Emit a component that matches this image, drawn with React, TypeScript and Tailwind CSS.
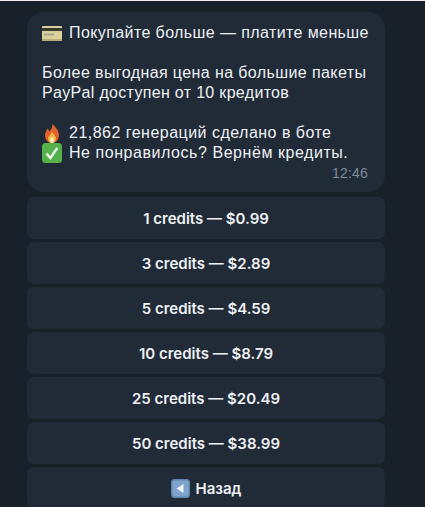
const packs = [
  "1 credits — $0.99",
  "3 credits — $2.89",
  "5 credits — $4.59",
  "10 credits — $8.79",
  "25 credits — $20.49",
  "50 credits — $38.99",
]

function CardIcon() {
  return (
    <svg width="20" height="15" viewBox="0 0 20 15" className="shrink-0">
      <rect x="0" y="0" width="20" height="15" rx="1" fill="#d9d09a" />
      <rect x="0" y="2" width="20" height="3" fill="#3a3a30" />
      <rect x="2" y="7.500" width="10" height="2" fill="#a3a594" />
      <rect x="0" y="13" width="20" height="2" fill="#b8ad78" />
    </svg>
  )
}

function FireIcon() {
  return (
    <svg width="20" height="20" viewBox="0 0 20 20" className="shrink-0">
      <path d="M10.500 0c.5 3 6.500 6 6.500 12 0 5-3.200 8-7 8s-7-3-7-8c0-3 1.800-4.500 2.500-6.500 1 1 1.500 2 1.800 3.300C8.800 7 11 4 10.500 0z" fill="#e0622a" />
      <path d="M10 8.500c.5 2 4 3.800 4 7 0 2.700-1.800 4.500-4 4.500s-4-2-4-4.500C6 13 9.500 11.500 10 8.500z" fill="#f7b545" />
      <path d="M10 13.500c.5 1 2 2.200 2 4 0 1.500-1 2.500-2 2.500s-2-1-2-2.500c0-1.800 1.500-3 2-4z" fill="#fdf0c0" />
    </svg>
  )
}

function CheckIcon() {
  return (
    <svg width="20" height="20" viewBox="0 0 20 20" className="shrink-0">
      <rect width="20" height="20" rx="3.500" fill="#55b24a" />
      <path d="M4.500 10.500l3.800 4.500 7-10" fill="none" stroke="#f2f7f0" strokeWidth="2.400" />
    </svg>
  )
}

function BackIcon() {
  return (
    <svg width="19" height="19" viewBox="0 0 19 19" className="shrink-0">
      <rect width="19" height="19" rx="3.500" fill="#5f84ad" />
      <rect x="1.500" y="1.500" width="16" height="16" rx="2" fill="#7fa3cb" />
      <path d="M12.500 5v9l-7-4.500z" fill="#f0f4f8" />
    </svg>
  )
}

export default function App() {
  return (
    <div className="h-[507px] w-[425px] overflow-hidden bg-[#18212a] border-t border-t-[#f2f2f2] pt-[11px] pl-[27px] font-['Liberation_Sans',sans-serif] text-[16px] leading-[20px] tracking-[0.4px] text-[#eef1f4] antialiased">
      <div className="w-[358px]">
        <div className="h-[180px] rounded-[17px] bg-[#212b38] pl-[15px] pr-[17px] pt-[11px] whitespace-nowrap">
          <div className="flex items-center gap-[7px]"><CardIcon />Покупайте больше — платите меньше</div>
          <div className="mt-[20px]">Более выгодная цена на большие пакеты</div>
          <div className="tracking-[0.32px]">PayPal доступен от 10 кредитов</div>
          <div className="mt-[20px] flex items-center gap-[7px] tracking-[0.48px]"><FireIcon />21,862 генераций сделано в боте</div>
          <div className="flex items-center gap-[7px] tracking-[0.55px]"><CheckIcon />Не понравилось? Вернём кредиты.</div>
          <div className="mt-px text-right text-[14px] leading-[18px] tracking-[0.2px] text-[#7d8b99]">12:46</div>
        </div>
        <div className="mt-[5px] flex flex-col gap-[3px] font-['Inter',sans-serif] tracking-normal">
          {packs.map(p => (
            <button key={p} className="flex h-[42px] items-center justify-center rounded-[7px] bg-[#212b38] pt-px font-semibold text-[15px] text-[#eef1f4]">{p}</button>
          ))}
          <button className="flex h-[42px] items-center justify-center gap-[6px] rounded-[7px] bg-[#212b38] pt-px font-semibold text-[15px] text-[#eef1f4]"><BackIcon />Назад</button>
        </div>
      </div>
    </div>
  )
}
